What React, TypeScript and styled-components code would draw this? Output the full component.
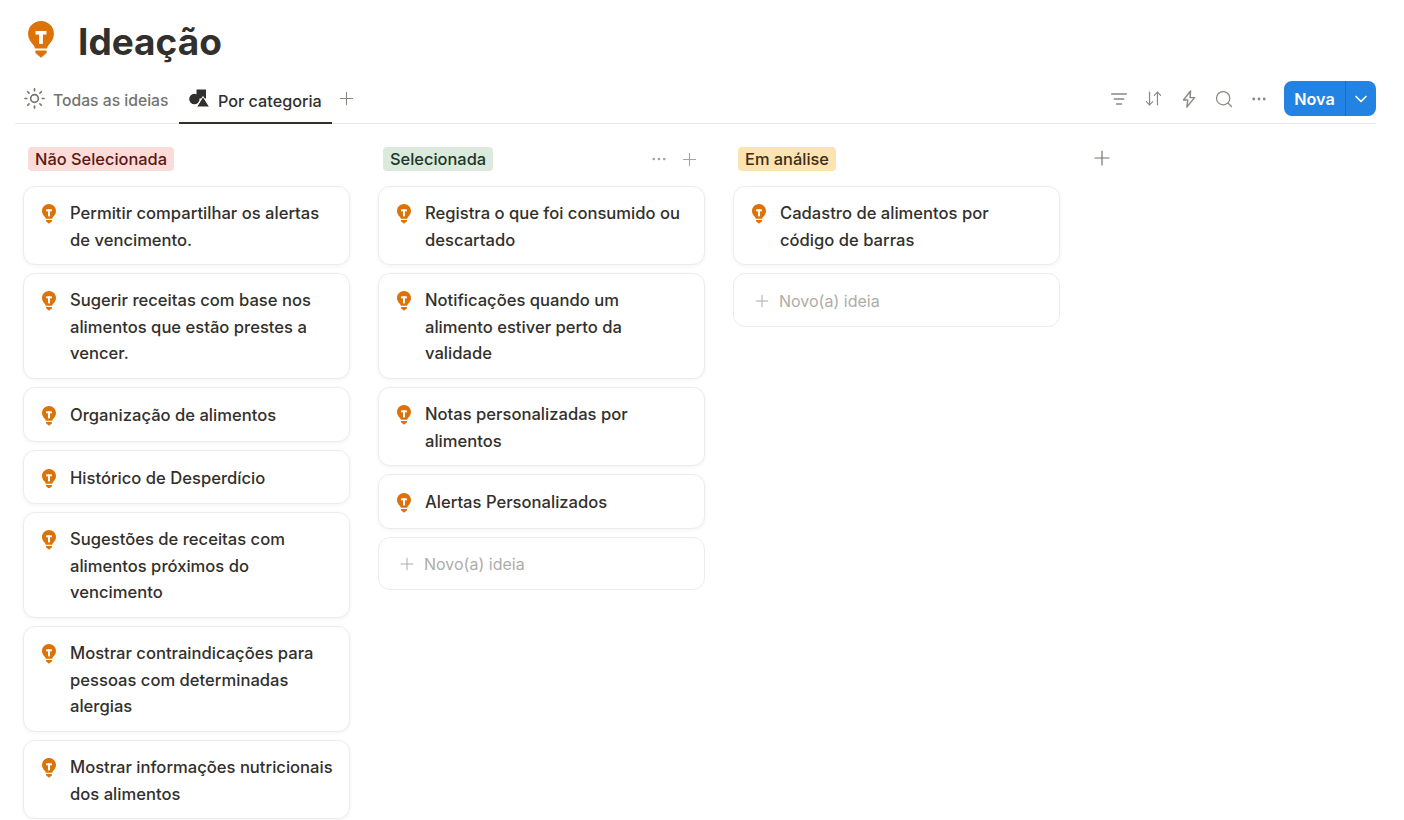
import React from 'react';
import styled, { createGlobalStyle } from 'styled-components';
import { ArrowDownUp, ChevronDown, Ellipsis, Plus, Search, Sun } from 'lucide-react';

interface ColumnData {
  name: string;
  tagBg: string;
  tagColor: string;
  cards: string[][];
  hasAdd?: boolean;
  hasActions?: boolean;
}

const columns: ColumnData[] = [
  {
    name: 'Não Selecionada',
    tagBg: '#fbdcd9',
    tagColor: '#5d1715',
    cards: [
      ['Permitir compartilhar os alertas', 'de vencimento.'],
      ['Sugerir receitas com base nos', 'alimentos que estão prestes a', 'vencer.'],
      ['Organização de alimentos'],
      ['Histórico de Desperdício'],
      ['Sugestões de receitas com', 'alimentos próximos do', 'vencimento'],
      ['Mostrar contraindicações para', 'pessoas com determinadas', 'alergias'],
      ['Mostrar informações nutricionais', 'dos alimentos'],
    ],
  },
  {
    name: 'Selecionada',
    tagBg: '#dbeadc',
    tagColor: '#1c3829',
    hasAdd: true,
    hasActions: true,
    cards: [
      ['Registra o que foi consumido ou', 'descartado'],
      ['Notificações quando um', 'alimento estiver perto da', 'validade'],
      ['Notas personalizadas por', 'alimentos'],
      ['Alertas Personalizados'],
    ],
  },
  {
    name: 'Em análise',
    tagBg: '#fbe4b0',
    tagColor: '#402c1b',
    hasAdd: true,
    cards: [['Cadastro de alimentos por', 'código de barras']],
  },
];

// top and bottom padding of a card, by its number of lines
const cardPadding: Record<number, string> = {
  1: '14px 8px 12px 18px',
  2: '13px 8px 11px 18px',
  3: '13px 8px 11.5px 18px',
};

const BulbIcon = ({ size }: { size: number }) => (
  <svg width={size} height={size * 1.42} viewBox="0 0 26 37" fill="none">
    <path
      d="M13 0C5.8 0 0 5.7 0 12.8c0 4.3 2.1 7.6 4.7 10.4 1.2 1.3 2 2.8 2.3 4.3h12c.3-1.5 1.1-3 2.3-4.3 2.6-2.8 4.7-6.1 4.7-10.4C26 5.7 20.2 0 13 0z"
      fill="#dd7208"
    />
    <rect x="7.5" y="10" width="11" height="3.6" fill="#fff" />
    <rect x="11.1" y="10" width="3.8" height="13" fill="#fff" />
    <path d="M7.4 29.6h11.2v2.4L13 36.8 7.4 32z" fill="#dd7208" />
  </svg>
);

const ShapesIcon = () => (
  <svg width="21" height="20" viewBox="0 0 21 20" fill="#32302c">
    <rect x="7.5" y="0.5" width="9.5" height="9" />
    <circle cx="5.4" cy="10" r="5.2" />
    <path d="M14 7.5L20.6 18H7.6z" stroke="#fff" strokeWidth="1" />
  </svg>
);

const FilterIcon = () => (
  <svg width="16" height="14" viewBox="0 0 16 14" fill="none" stroke="#8a8883" strokeWidth="1.4" strokeLinecap="round">
    <path d="M.7 2h14.6M3.2 7h9.6M5.5 12h5" />
  </svg>
);

const BoltIcon = () => (
  <svg width="14" height="18" viewBox="0 0 14 18" fill="none" stroke="#8a8883" strokeWidth="1.4" strokeLinejoin="round">
    <path d="M8.6 1L1.4 10h4.4l-1 7 7.8-9.4H8z" />
  </svg>
);

const App = () => (
  <>
    <GlobalStyle />
    <Page>
      <TitleRow>
        <TitleIcon>
          <BulbIcon size={26} />
        </TitleIcon>
        <Title>Ideação</Title>
      </TitleRow>

      <TabBar>
        <Tabs>
          <Tab>
            <TabIcon $lift={6}>
              <Sun size={23} strokeWidth={1.7} color="#75736e" />
            </TabIcon>
            <TabLabel>Todas as ideias</TabLabel>
          </Tab>
          <Tab $active>
            <TabIcon $lift={4}>
              <ShapesIcon />
            </TabIcon>
            <TabLabel $active>Por categoria</TabLabel>
          </Tab>
          <AddTab>
            <Plus size={21} strokeWidth={1.2} />
          </AddTab>
        </Tabs>
        <Tools>
          <ToolButton>
            <FilterIcon />
          </ToolButton>
          <ToolButton>
            <ArrowDownUp size={19} strokeWidth={1.5} />
          </ToolButton>
          <ToolButton>
            <BoltIcon />
          </ToolButton>
          <ToolButton>
            <Search size={20} strokeWidth={1.5} />
          </ToolButton>
          <ToolButton>
            <Ellipsis size={18} strokeWidth={1.8} />
          </ToolButton>
          <NewButton>
            <NewLabel>Nova</NewLabel>
            <NewArrow>
              <ChevronDown size={20} strokeWidth={2} />
            </NewArrow>
          </NewButton>
        </Tools>
      </TabBar>

      <Board>
        {columns.map((col) => (
          <Column key={col.name}>
            <ColumnHeader>
              <Tag $bg={col.tagBg} $color={col.tagColor}>
                {col.name}
              </Tag>
              {col.hasActions && (
                <ColumnActions>
                  <Ellipsis size={18} strokeWidth={1.6} />
                  <Plus size={21} strokeWidth={1.2} />
                </ColumnActions>
              )}
            </ColumnHeader>
            <CardList>
              {col.cards.map((lines) => (
                <Card key={lines[0]} $lines={lines.length}>
                  <CardIcon>
                    <BulbIcon size={14} />
                  </CardIcon>
                  <CardText>
                    {lines.map((line) => (
                      <div key={line}>{line}</div>
                    ))}
                  </CardText>
                </Card>
              ))}
              {col.hasAdd && (
                <AddCard>
                  <Plus size={20} strokeWidth={1.2} />
                  <span>Novo(a) ideia</span>
                </AddCard>
              )}
            </CardList>
          </Column>
        ))}
        <AddColumn>
          <Plus size={24} strokeWidth={1.2} />
        </AddColumn>
      </Board>
    </Page>
  </>
);

export default App;

const GlobalStyle = createGlobalStyle`
  html, body {
    margin: 0;
    height: 100%;
    overflow: hidden;
    background: #fff;
  }
  body {
    font-family: Inter, 'Noto Sans', sans-serif;
    color: #32302c;
  }
`;

const Page = styled.div`
  width: 1361px;
  height: 820px;
  margin-left: 15px;
  overflow: hidden;
`;

const TitleRow = styled.div`
  display: flex;
  align-items: center;
  height: 80px;
  padding: 0 0 0 13px;
  gap: 24px;
`;

const TitleIcon = styled.div`
  display: flex;
  margin-top: -1px;
`;

const Title = styled.h1`
  margin: 5px 0 0;
  font-size: 37px;
  font-weight: 700;
  line-height: 1.2;
  color: #32302c;
`;

const TabBar = styled.div`
  display: flex;
  justify-content: space-between;
  height: 43px;
  border-bottom: 1px solid #e9e9e7;
  box-sizing: content-box;
`;

const Tabs = styled.div`
  display: flex;
  align-items: stretch;
  padding-left: 8px;
`;

const Tab = styled.div<{ $active?: boolean }>`
  display: flex;
  align-items: center;
  gap: ${(p) => (p.$active ? '8px' : '7px')};
  padding: ${(p) => (p.$active ? '0 10px' : '0 10.5px 0 0')};
  border-bottom: 2px solid ${(p) => (p.$active ? '#32302c' : 'transparent')};
  margin-bottom: -1px;
  height: 44px;
  box-sizing: border-box;
`;

const TabIcon = styled.span<{ $lift: number }>`
  display: flex;
  margin-bottom: ${(p) => p.$lift}px;
`;

const TabLabel = styled.span<{ $active?: boolean }>`
  font-size: ${(p) => (p.$active ? '16.2px' : '15.7px')};
  font-weight: 500;
  margin-bottom: ${(p) => (p.$active ? '0' : '2px')};
  color: ${(p) => (p.$active ? '#32302c' : '#75736e')};
  white-space: nowrap;
`;

const AddTab = styled.div`
  display: flex;
  align-items: center;
  margin-left: 4px;
  margin-bottom: 7px;
  color: #8a8883;
`;

const Tools = styled.div`
  display: flex;
  align-items: flex-start;
  padding-top: 1px;
`;

const ToolButton = styled.div`
  display: flex;
  align-items: center;
  justify-content: center;
  width: 35px;
  height: 35px;
  color: #8a8883;
`;

const NewButton = styled.div`
  display: flex;
  align-items: stretch;
  width: 92px;
  height: 35px;
  margin-left: 8px;
  border-radius: 8px;
  background: #2383e2;
  color: #fff;
  overflow: hidden;
`;

const NewLabel = styled.span`
  display: flex;
  flex: 1;
  align-items: center;
  justify-content: center;
  font-size: 16.2px;
  font-weight: 600;
  border-right: 1px solid #1a6fc4;
`;

const NewArrow = styled.span`
  display: flex;
  align-items: center;
  justify-content: center;
  width: 30px;
`;

const Board = styled.div`
  display: flex;
  gap: 28px;
  padding: 23px 0 0 8px;
`;

const Column = styled.div`
  width: 327px;
  flex-shrink: 0;
`;

const ColumnHeader = styled.div`
  display: flex;
  align-items: center;
  justify-content: space-between;
  height: 24px;
  padding: 0 5.5px 0 5px;
  margin-bottom: 15px;
`;

const Tag = styled.span<{ $bg: string; $color: string }>`
  display: inline-flex;
  align-items: center;
  height: 24px;
  padding: 0 7px;
  border-radius: 4px;
  font-size: 16.4px;
  font-weight: 500;
  white-space: nowrap;
  background: ${(p) => p.$bg};
  color: ${(p) => p.$color};
`;

const ColumnActions = styled.div`
  display: flex;
  align-items: center;
  gap: 10.5px;
  color: #a5a3a0;
`;

const CardList = styled.div`
  display: flex;
  flex-direction: column;
  gap: 8px;
`;

const Card = styled.div<{ $lines: number }>`
  display: flex;
  gap: 14px;
  box-sizing: border-box;
  padding: ${(p) => cardPadding[p.$lines]};
  border: 1px solid #ececea;
  border-radius: 12px;
  background: #fff;
  box-shadow: 0 1px 4px rgba(25, 25, 25, 0.05);
`;

const CardIcon = styled.div`
  display: flex;
  flex-shrink: 0;
  margin-top: 4px;
`;

const CardText = styled.div`
  font-size: 16.6px;
  font-weight: 500;
  line-height: 26.5px;
  color: #32302c;
  white-space: nowrap;
`;

const AddCard = styled.div`
  display: flex;
  align-items: center;
  gap: 7px;
  height: 53.5px;
  box-sizing: border-box;
  padding: 2px 0 0 18px;
  border: 1px solid #ececea;
  border-radius: 12px;
  font-size: 16px;
  color: #aeaca8;
`;

const AddColumn = styled.div`
  display: flex;
  align-items: flex-start;
  padding: 0 0 0 2px;
  margin-top: -1px;
  color: #75736e;
`;
